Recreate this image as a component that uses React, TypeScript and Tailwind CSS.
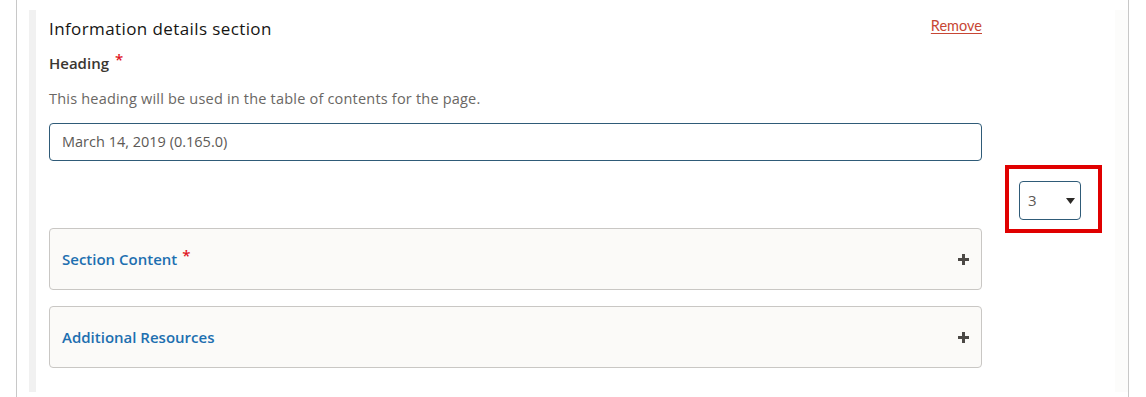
import React from 'react';

function PlusIcon() {
  return (
    <svg width="11" height="11" viewBox="0 0 11 11" className="shrink-0">
      <rect x="4" y="0" width="3" height="11" fill="#4b4845" />
      <rect x="0" y="4" width="11" height="3" fill="#4b4845" />
    </svg>
  );
}

function Accordion({ title, required }: { title: string; required?: boolean }) {
  return (
    <div className="flex h-[62px] items-center justify-between rounded-[4px] border border-[#c9c7c4] bg-[#fbfaf8] pl-[12px] pr-[12px]">
      <span className="text-[15px] font-semibold text-[#1d6fb0]">
        {title}
        {required && <span className="ml-[5px] relative top-[-4px] text-[#e0141e]">*</span>}
      </span>
      <PlusIcon />
    </div>
  );
}

export default function App() {
  return (
    <div className="flex h-[397px] w-[1146px] overflow-hidden bg-white font-['Open_Sans',sans-serif]">
      <div className="ml-[16px] flex h-[397px] w-[1113px] shrink-0 border-x border-[#c8c8c8] pl-[12px] pt-[10px]">
        <div className="flex h-[382px] w-[1099px] shrink-0 border-l-[7px] border-[#f1f1f1]">
          {/* main column */}
          <div className="w-[946px] shrink-0 pl-[13px] pt-[7px]">
            <div className="flex h-[24px] items-center justify-between">
              <h2 className="text-[17px] font-medium tracking-[0.4px] text-[#161513]">Information details section</h2>
              <a className="relative top-[-3px] font-['Lato',sans-serif] text-[14.5px] text-[#c74634] underline underline-offset-2">
                Remove
              </a>
            </div>

            <div className="mt-[11px] flex h-[22px] items-center text-[15px] font-semibold text-[#3a3631]">
              Heading
              <span className="ml-[6px] relative top-[-4px] text-[#e0141e]">*</span>
            </div>

            <p className="mt-[15px] h-[20px] text-[14.5px] leading-[20px] tracking-[0.2px] text-[#6a6764]">
              This heading will be used in the table of contents for the page.
            </p>

            <div className="mt-[14px] flex h-[38px] items-center rounded-[4px] border border-[#2f5b78] pl-[12px] text-[14.5px] text-[#5c5955]">
              March 14, 2019 (0.165.0)
            </div>

            <div className="mt-[67px]">
              <Accordion title="Section Content" required />
            </div>
            <div className="mt-[16px]">
              <Accordion title="Additional Resources" />
            </div>
          </div>

          {/* position select column */}
          <div className="w-[133px] shrink-0 pl-[23px] pt-[155px]">
            <div className="flex h-[68px] w-[97px] border-4 border-[#e00000] pl-[10px] pt-[12px]">
              <div className="flex h-[39px] w-[62px] items-center justify-between rounded-[4px] border border-[#2f5b78] pl-[8px] pr-[5px] text-[15px] text-[#5c5955]">
                3
                <svg width="9" height="6" viewBox="0 0 9 6">
                  <path d="M0 0 L9 0 L4.5 6 Z" fill="#2b2926" />
                </svg>
              </div>
            </div>
          </div>
          <div className="w-[13px] shrink-0 bg-[#fcfcfb]" />
        </div>
      </div>
    </div>
  );
}
